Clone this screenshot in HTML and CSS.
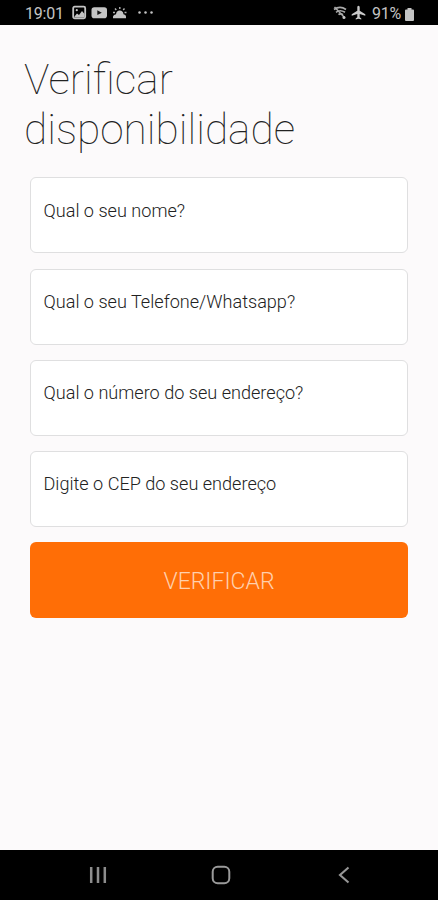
FILE: index.html
```html
<!DOCTYPE html>
<html lang="pt-BR">
<head>
<meta charset="utf-8">
<title>Verificar disponibilidade</title>
<link rel="stylesheet" href="styles.css">
</head>
<body>
<header class="status">
  <span class="clock">19:01</span>
  <svg class="notices" width="84" height="16" viewBox="0 0 84 16">
    <rect x="1.2" y="1.7" width="12" height="11.6" rx="1.5" fill="none" stroke="#c4c4c4" stroke-width="1.8"/>
    <path d="M2.5 11.5 L5 8.5 L7 10 L10 6 L12.5 9 V12.5 H2.5Z" fill="#c4c4c4"/>
    <circle cx="4.8" cy="5.2" r="1.1" fill="#c4c4c4"/>
    <rect x="19.5" y="2.2" width="15.5" height="11" rx="2.8" fill="#c4c4c4"/>
    <path d="M25.3 5.3 L29.8 7.7 L25.3 10.1Z" fill="#151515"/>
    <path d="M41 13.3 V11.5 Q41.5 9.6 44 9.2 Q44.5 5.5 47.8 5.5 Q51 5.5 51.5 9.2 Q54 9.6 54 11.5 V13.3Z" fill="#c4c4c4"/>
    <path d="M47.8 2 V4 M43 3.5 L44.3 5 M52.5 3.5 L51.2 5 M41 7.5 H43 M52.5 7.5 H54.5" stroke="#b4b4b4" stroke-width="1.4"/>
    <circle cx="67.5" cy="7.5" r="1.25" fill="#c4c4c4"/>
    <circle cx="73.5" cy="7.5" r="1.25" fill="#c4c4c4"/>
    <circle cx="79.5" cy="7.5" r="1.25" fill="#c4c4c4"/>
  </svg>
  <svg class="signals" width="33" height="16" viewBox="0 0 33 16">
    <path d="M1 4.5 Q7 .3 13 4.5 M3 7.3 Q7 4.2 12 7.3 M5.5 9.7 Q7.5 8 10 9.7" fill="none" stroke="#aaa" stroke-width="1.7"/>
    <path d="M1.5 2 L11.5 12.5" stroke="#aaa" stroke-width="1.5"/>
    <circle cx="11" cy="12.5" r="1.5" fill="#c4c4c4"/>
    <path d="M25.5 .8 C26.3 .8 26.7 1.5 26.7 2.5 V5.8 L32.3 9.3 V10.8 L26.7 9 V12.2 L28.3 13.5 V14.5 L25.5 13.7 L22.7 14.5 V13.5 L24.3 12.2 V9 L18.7 10.8 V9.3 L24.3 5.8 V2.5 C24.3 1.5 24.7 .8 25.5 .8Z" fill="#cacaca"/>
  </svg>
  <span class="percent">91%</span>
  <svg class="battery" width="9" height="13" viewBox="0 0 9 13">
    <path d="M2.5 0 H6.5 V1.5 H8 Q9 1.5 9 2.5 V12 Q9 13 8 13 H1 Q0 13 0 12 V2.5 Q0 1.5 1 1.5 H2.5Z" fill="#c4c4c4"/>
  </svg>
</header>
<main class="page">
  <h1>Verificar disponibilidade</h1>
  <form class="form">
    <label class="field">Qual o seu nome?</label>
    <label class="field">Qual o seu Telefone/Whatsapp?</label>
    <label class="field">Qual o número do seu endereço?</label>
    <label class="field">Digite o CEP do seu endereço</label>
    <button class="submit" type="button">VERIFICAR</button>
  </form>
</main>
<nav class="navbar">
  <svg width="18" height="18" viewBox="0 0 18 18"><path d="M2.2 1 V17 M9 1 V17 M15.8 1 V17" stroke="#8c8c8c" stroke-width="2.5"/></svg>
  <svg width="20" height="20" viewBox="0 0 20 20"><rect x="1.7" y="1.7" width="16.6" height="16.6" rx="5" fill="none" stroke="#9a9a9a" stroke-width="2"/></svg>
  <svg width="12" height="18" viewBox="0 0 12 18"><path d="M10.5 1.5 L2 9 L10.5 16.5" fill="none" stroke="#969696" stroke-width="2.1"/></svg>
</nav>
</body>
</html>
```

FILE: styles.css
```css
* { box-sizing: border-box; }
body {
  margin: 0;
  height: 900px;
  display: flex;
  flex-direction: column;
  background: #fcfafb;
  font-family: Roboto, sans-serif;
}
.status {
  height: 25px;
  flex: none;
  display: flex;
  align-items: center;
  padding: 1px 24px 0 25px;
  background: #000;
  color: #c4c4c4;
  font-size: 16px;
}
.clock { width: 38px; letter-spacing: -.2px; padding-top: 1px; }
.notices { margin-left: 9px; }
.signals { margin-left: auto; margin-right: 6px; }
.percent { width: 30px; letter-spacing: -.3px; padding-top: 1px; }
.battery { margin-left: 3px; margin-top: 2px; }
.page { flex: 1; }
h1 {
  margin: 30px 24px 22.4px;
  font-size: 42.4px;
  line-height: 50px;
  font-weight: 100;
  color: #222;
}
.form {
  margin: 0 30px;
  display: flex;
  flex-direction: column;
  gap: 15.2px;
}
.field {
  height: 76px;
  padding: 21.5px 12.5px;
  background: #fff;
  border: 1px solid #dfdfe0;
  border-radius: 6px;
  font-size: 18.1px;
  font-weight: 300;
  line-height: 21px;
  color: #222;
}
.submit {
  height: 76px;
  border: 0;
  border-radius: 6px;
  background: #ff6e06;
  color: #ffd0ad;
  font: 300 23px/28px Roboto, sans-serif;
  padding: 3px 0 0;
}
.navbar {
  height: 50.5px;
  flex: none;
  display: grid;
  grid-template-columns: repeat(3, 122.8px);
  justify-content: center;
  justify-items: center;
  align-items: center;
  padding-left: 4px;
  background: #000;
}
```
